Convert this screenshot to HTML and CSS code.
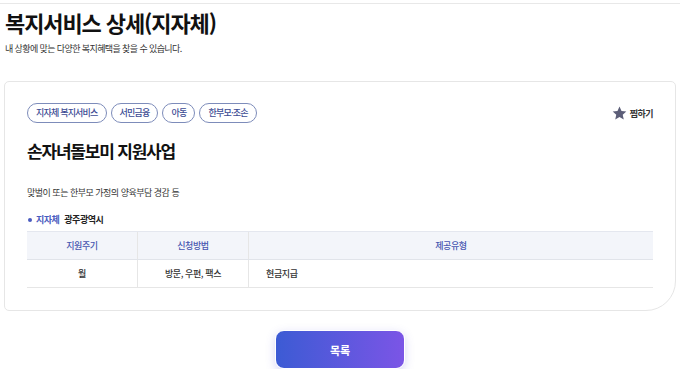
FILE: index.html
```html
<!DOCTYPE html>
<html lang="ko">
  <head>
    <meta charset="UTF-8" />
    <meta name="viewport" content="width=device-width, initial-scale=1.0" />
    <title>복지서비스 상세(지자체)</title>
    <link rel="stylesheet" href="styles.css">
  </head>
  <body>
    <div class="topline"></div>

    <div class="page-head">
      <h1>복지서비스 상세(지자체)</h1>
      <p>내 상황에 맞는 다양한 복지혜택을 찾을 수 있습니다.</p>
    </div>

    <div class="card">
      <div class="card-top">
        <div class="tags">
          <span class="tag">지자체 복지서비스</span>
          <span class="tag">서민금융</span>
          <span class="tag">아동</span>
          <span class="tag">한부모·조손</span>
        </div>
        <button class="fav">
          <svg width="15" height="14" viewBox="0 0 24 23">
            <path d="M12 0.8l3.3 7.3 7.9 0.8-5.9 5.4 1.7 7.9L12 18.2l-7 4 1.7-7.9L0.8 8.9l7.9-0.8z" fill="#5c5e78" />
          </svg>
          찜하기
        </button>
      </div>

      <h2>손자녀돌보미 지원사업</h2>

      <p class="desc">맞벌이 또는 한부모 가정의 양육부담 경감 등</p>

      <div class="info">
        <span class="dot"></span>
        <span class="info-label">지자체</span>
        <span class="info-value">광주광역시</span>
      </div>

      <table class="detail">
        <thead>
          <tr>
            <th class="col-s">지원주기</th>
            <th class="col-s">신청방법</th>
            <th>제공유형</th>
          </tr>
        </thead>
        <tbody>
          <tr>
            <td class="center">월</td>
            <td class="center">방문, 우편, 팩스</td>
            <td>현금지급</td>
          </tr>
        </tbody>
      </table>
    </div>

    <div class="actions">
      <button class="list-btn">목록</button>
    </div>
  </body>
</html>
```

FILE: styles.css
```css
body {
  margin: 0;
  font-family: "Noto Sans CJK KR", "Noto Sans", sans-serif;
  color: #222;
  background: #fff;
}

.topline {
  height: 3px;
  border-bottom: 1px solid #e8e8e8;
}

.page-head {
  padding: 0 5px;
}

.page-head h1 {
  margin: 2px 0 0;
  font-size: 22px;
  font-weight: 700;
  letter-spacing: -1.1px;
  line-height: 32px;
  color: #111;
}

.page-head p {
  margin: 4px 0 0;
  font-size: 9px;
  letter-spacing: -0.6px;
  color: #333;
}

.card {
  margin: 26px 4px 0;
  padding: 21px 22px 22px;
  border: 1px solid #e6e6e6;
  border-radius: 5px 5px 30px 5px;
}

.card-top {
  display: flex;
  justify-content: space-between;
  align-items: center;
}

.tags {
  display: flex;
  gap: 4px;
}

.tag {
  display: inline-block;
  height: 18px;
  line-height: 18px;
  padding: 0 8px;
  border: 1px solid #7d8cba;
  border-radius: 10px;
  font-size: 9px;
  font-weight: 500;
  letter-spacing: -0.8px;
  color: #3d4c94;
}

.fav {
  display: flex;
  align-items: center;
  gap: 3px;
  padding: 0;
  border: 0;
  background: none;
  font-family: inherit;
  font-size: 9px;
  font-weight: 700;
  letter-spacing: -0.5px;
  color: #333;
}

.card h2 {
  margin: 15px 0 0;
  font-size: 17px;
  font-weight: 700;
  letter-spacing: -1.2px;
  color: #111;
}

.desc {
  margin: 23px 0 0;
  font-size: 9px;
  letter-spacing: -0.5px;
  color: #333;
}

.info {
  display: flex;
  align-items: center;
  margin-top: 14px;
  font-size: 9px;
  letter-spacing: -0.5px;
}

.dot {
  width: 4px;
  height: 4px;
  border-radius: 50%;
  background: #4a5cc0;
  margin: 0 4px 0 1px;
}

.info-label {
  color: #4a5cc0;
  font-weight: 700;
  margin-right: 5px;
}

.info-value {
  font-weight: 700;
  color: #222;
}

.detail {
  width: 100%;
  margin-top: 5px;
  border-collapse: collapse;
  font-size: 9px;
  letter-spacing: -0.4px;
}

.detail th {
  height: 27px;
  padding: 0;
  background: #f3f5fa;
  border-top: 1px solid #e4e7ef;
  border-bottom: 1px solid #e1e4ea;
  color: #4756b0;
  font-weight: 500;
}

.detail th + th,
.detail td + td {
  border-left: 1px solid #e6e6e6;
}

.detail .col-s {
  width: 110px;
}

.detail td {
  height: 27px;
  padding: 0 17px;
  border-bottom: 1px solid #e6e6e6;
  color: #333;
  font-weight: 500;
}

.detail td.center {
  text-align: center;
  padding: 0;
}

.actions {
  display: flex;
  justify-content: center;
  padding-top: 19px;
}

.list-btn {
  width: 130px;
  height: 39px;
  border: 1px solid #fff;
  border-radius: 9px;
  background: linear-gradient(90deg, #3c5bd4, #7b55e6);
  box-shadow: 0 3px 10px rgba(100, 90, 220, 0.25);
  color: #fff;
  font-family: inherit;
  font-size: 11px;
  font-weight: 700;
}
```
